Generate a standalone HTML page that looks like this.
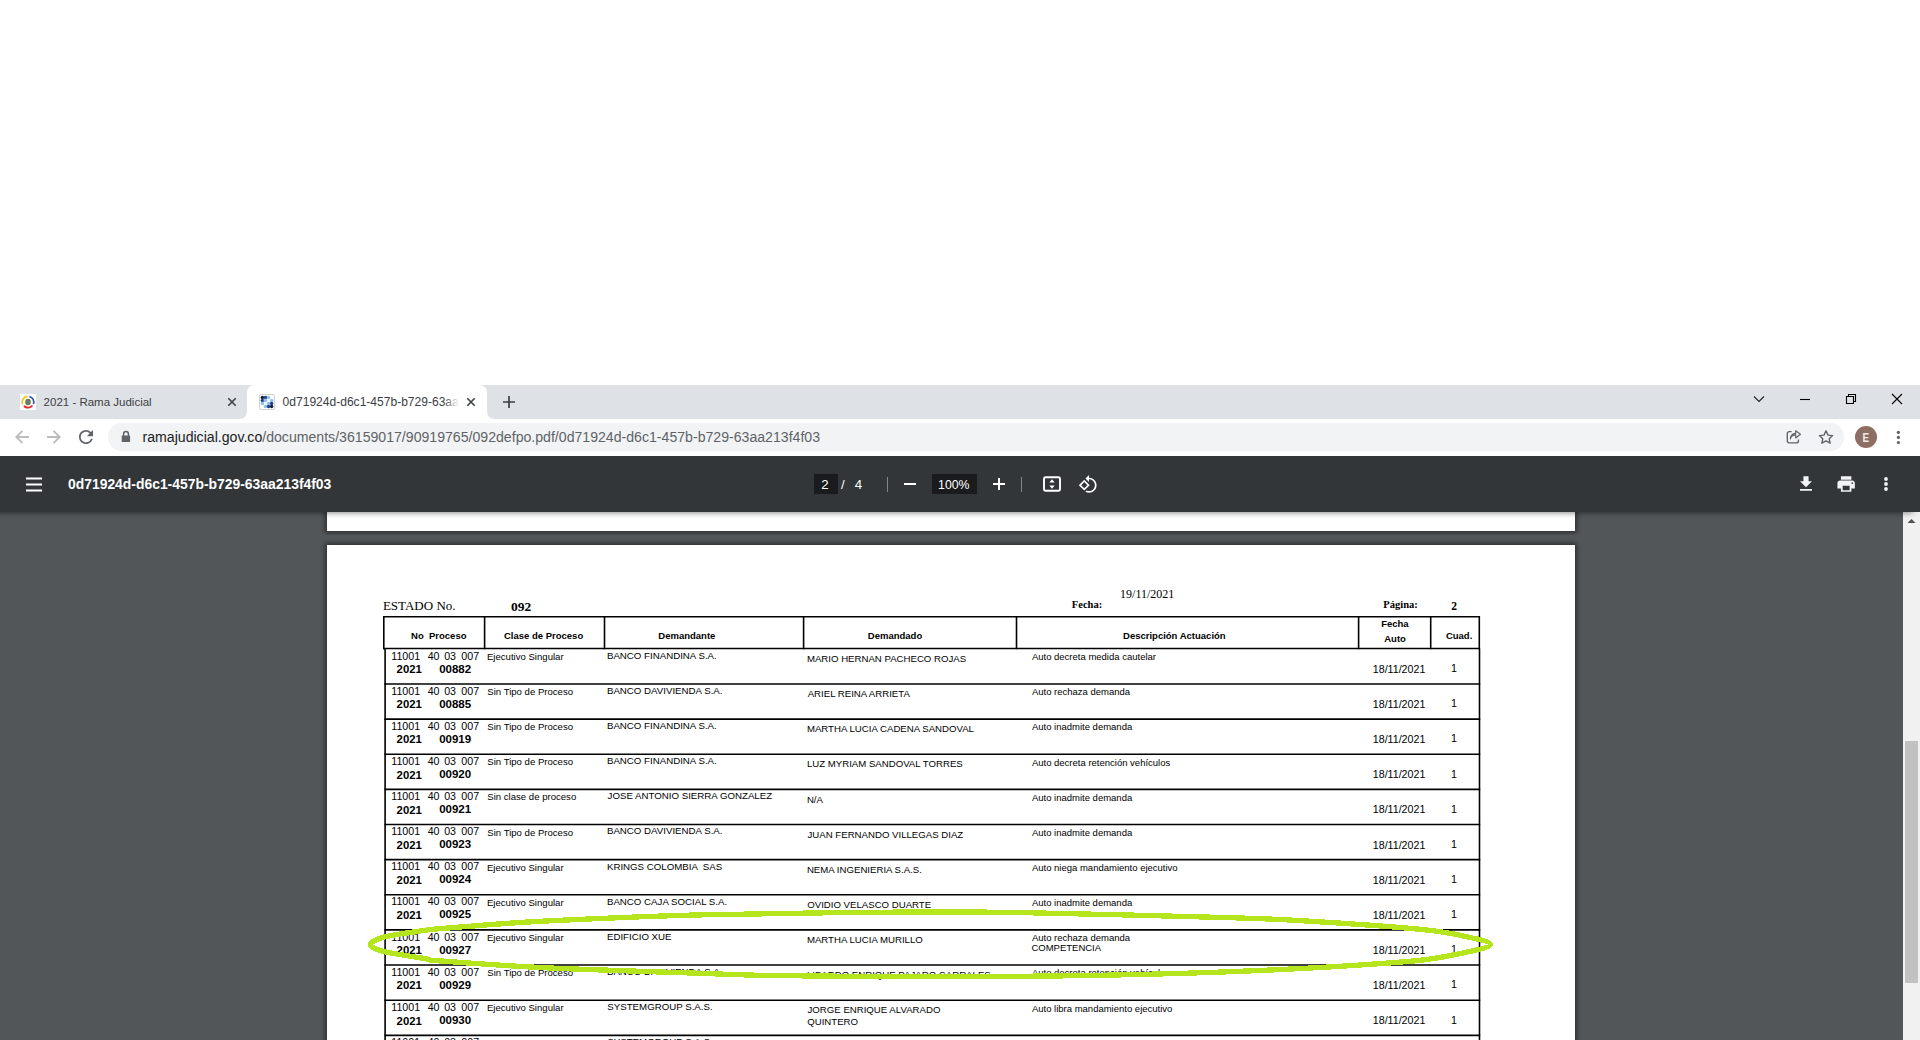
<!DOCTYPE html>
<html><head><meta charset="utf-8"><style>
html,body{margin:0;padding:0;background:#fff;overflow:hidden;}
svg{display:block;} text{white-space:pre;}
</style></head><body>
<svg width="1920" height="1040" viewBox="0 0 1920 1040">
<defs><linearGradient id="tabfade" x1="0" x2="1"><stop offset="0" stop-color="#fff" stop-opacity="0"/><stop offset="1" stop-color="#fff" stop-opacity="1"/></linearGradient></defs>
<rect x="0" y="512" width="1903" height="528" fill="#525659" />
<defs><filter id="sh" x="-5%" y="-5%" width="110%" height="110%"><feGaussianBlur stdDeviation="2.5"/></filter><filter id="tsh" x="-1%" y="-100%" width="102%" height="300%"><feGaussianBlur stdDeviation="3"/></filter><linearGradient id="fade" x1="0" x2="1"><stop offset="0" stop-color="#3c4043" stop-opacity="1"/><stop offset="1" stop-color="#3c4043" stop-opacity="0"/></linearGradient></defs>
<rect x="325" y="505" width="1252" height="28" fill="rgba(0,0,0,0.45)" filter="url(#sh)"/>
<rect x="325" y="543" width="1252" height="510" fill="rgba(0,0,0,0.45)" filter="url(#sh)"/>
<rect x="327" y="512" width="1248" height="19" fill="#fff" />
<rect x="327" y="545" width="1248" height="495" fill="#fff" />
<line x1="383.1" y1="616.8" x2="1479.9" y2="616.8" stroke="#000" stroke-width="1.6"/>
<line x1="383.1" y1="648.5" x2="1479.9" y2="648.5" stroke="#000" stroke-width="1.6"/>
<line x1="383.8" y1="616.0999999999999" x2="383.8" y2="649.2" stroke="#000" stroke-width="1.6"/>
<line x1="484.6" y1="616.0999999999999" x2="484.6" y2="649.2" stroke="#000" stroke-width="1.6"/>
<line x1="604.5" y1="616.0999999999999" x2="604.5" y2="649.2" stroke="#000" stroke-width="1.6"/>
<line x1="803.6" y1="616.0999999999999" x2="803.6" y2="649.2" stroke="#000" stroke-width="1.6"/>
<line x1="1016.5" y1="616.0999999999999" x2="1016.5" y2="649.2" stroke="#000" stroke-width="1.6"/>
<line x1="1358.6" y1="616.0999999999999" x2="1358.6" y2="649.2" stroke="#000" stroke-width="1.6"/>
<line x1="1430.7" y1="616.0999999999999" x2="1430.7" y2="649.2" stroke="#000" stroke-width="1.6"/>
<line x1="1479.3" y1="616.0999999999999" x2="1479.3" y2="649.2" stroke="#000" stroke-width="1.6"/>
<line x1="384.4" y1="683.9399999999999" x2="1480.2" y2="683.9399999999999" stroke="#000" stroke-width="1.6"/>
<line x1="384.4" y1="719.0799999999999" x2="1480.2" y2="719.0799999999999" stroke="#000" stroke-width="1.6"/>
<line x1="384.4" y1="754.2199999999999" x2="1480.2" y2="754.2199999999999" stroke="#000" stroke-width="1.6"/>
<line x1="384.4" y1="789.3599999999999" x2="1480.2" y2="789.3599999999999" stroke="#000" stroke-width="1.6"/>
<line x1="384.4" y1="824.4999999999999" x2="1480.2" y2="824.4999999999999" stroke="#000" stroke-width="1.6"/>
<line x1="384.4" y1="859.64" x2="1480.2" y2="859.64" stroke="#000" stroke-width="1.6"/>
<line x1="384.4" y1="894.78" x2="1480.2" y2="894.78" stroke="#000" stroke-width="1.6"/>
<line x1="384.4" y1="929.92" x2="1480.2" y2="929.92" stroke="#000" stroke-width="1.6"/>
<line x1="384.4" y1="965.06" x2="1480.2" y2="965.06" stroke="#000" stroke-width="1.6"/>
<line x1="384.4" y1="1000.1999999999999" x2="1480.2" y2="1000.1999999999999" stroke="#000" stroke-width="1.6"/>
<line x1="384.4" y1="1035.34" x2="1480.2" y2="1035.34" stroke="#000" stroke-width="1.6"/>
<line x1="385.1" y1="648.5" x2="385.1" y2="1040" stroke="#000" stroke-width="1.6"/>
<line x1="1479.5" y1="648.5" x2="1479.5" y2="1040" stroke="#000" stroke-width="1.6"/>
<text x="382.92" y="610.20" font-family="'Liberation Serif'" font-size="13.0" font-weight="400" fill="#000" >ESTADO No.</text>
<text x="510.89" y="610.50" font-family="'Liberation Serif'" font-size="13.5" font-weight="700" fill="#000" >092</text>
<text x="1071.87" y="607.90" font-family="'Liberation Serif'" font-size="10.5" font-weight="700" fill="#000" >Fecha:</text>
<text x="1120.08" y="597.90" font-family="'Liberation Serif'" font-size="12.0" font-weight="400" fill="#000" >19/11/2021</text>
<text x="1383.37" y="608.00" font-family="'Liberation Serif'" font-size="10.5" font-weight="700" fill="#000" >Página:</text>
<text x="1451.21" y="609.90" font-family="'Liberation Serif'" font-size="11.5" font-weight="700" fill="#000" >2</text>
<text x="411.06" y="639.20" font-family="'Liberation Sans'" font-size="9.5" font-weight="700" fill="#000" >No  Proceso</text>
<text x="504.01" y="639.20" font-family="'Liberation Sans'" font-size="9.5" font-weight="700" fill="#000" >Clase de Proceso</text>
<text x="658.36" y="639.00" font-family="'Liberation Sans'" font-size="9.5" font-weight="700" fill="#000" >Demandante</text>
<text x="867.86" y="639.20" font-family="'Liberation Sans'" font-size="9.5" font-weight="700" fill="#000" >Demandado</text>
<text x="1123.06" y="639.20" font-family="'Liberation Sans'" font-size="9.5" font-weight="700" fill="#000" >Descripción Actuación</text>
<text x="1381.16" y="626.70" font-family="'Liberation Sans'" font-size="9.5" font-weight="700" fill="#000" >Fecha</text>
<text x="1384.26" y="641.60" font-family="'Liberation Sans'" font-size="9.5" font-weight="700" fill="#000" >Auto</text>
<text x="1445.91" y="638.80" font-family="'Liberation Sans'" font-size="9.5" font-weight="700" fill="#000" >Cuad.</text>
<text x="391.29" y="659.50" font-family="'Liberation Sans'" font-size="10.67" font-weight="400" fill="#000" >11001</text>
<text x="427.64" y="659.50" font-family="'Liberation Sans'" font-size="10.67" font-weight="400" fill="#000" >40</text>
<text x="444.18" y="659.50" font-family="'Liberation Sans'" font-size="10.67" font-weight="400" fill="#000" >03</text>
<text x="461.33" y="659.50" font-family="'Liberation Sans'" font-size="10.67" font-weight="400" fill="#000" >007</text>
<text x="396.60" y="673.10" font-family="'Liberation Sans'" font-size="11.33" font-weight="700" fill="#000" >2021</text>
<text x="439.14" y="672.50" font-family="'Liberation Sans'" font-size="11.5" font-weight="700" fill="#000" >00882</text>
<text x="606.95" y="658.70" font-family="'Liberation Sans'" font-size="9.7" font-weight="400" fill="#000" >BANCO FINANDINA S.A.</text>
<text x="486.96" y="659.90" font-family="'Liberation Sans'" font-size="9.58" font-weight="400" fill="#000" >Ejecutivo Singular</text>
<text x="806.91" y="662.00" font-family="'Liberation Sans'" font-size="9.63" font-weight="400" fill="#000" >MARIO HERNAN PACHECO ROJAS</text>
<text x="1031.88" y="660.20" font-family="'Liberation Sans'" font-size="9.5" font-weight="400" fill="#000" >Auto decreta medida cautelar</text>
<text x="1372.79" y="672.80" font-family="'Liberation Sans'" font-size="10.67" font-weight="400" fill="#000" >18/11/2021</text>
<text x="1450.99" y="672.20" font-family="'Liberation Sans'" font-size="10.67" font-weight="400" fill="#000" >1</text>
<text x="391.29" y="694.64" font-family="'Liberation Sans'" font-size="10.67" font-weight="400" fill="#000" >11001</text>
<text x="427.64" y="694.64" font-family="'Liberation Sans'" font-size="10.67" font-weight="400" fill="#000" >40</text>
<text x="444.18" y="694.64" font-family="'Liberation Sans'" font-size="10.67" font-weight="400" fill="#000" >03</text>
<text x="461.33" y="694.64" font-family="'Liberation Sans'" font-size="10.67" font-weight="400" fill="#000" >007</text>
<text x="396.60" y="708.24" font-family="'Liberation Sans'" font-size="11.33" font-weight="700" fill="#000" >2021</text>
<text x="439.14" y="707.64" font-family="'Liberation Sans'" font-size="11.5" font-weight="700" fill="#000" >00885</text>
<text x="606.95" y="693.84" font-family="'Liberation Sans'" font-size="9.7" font-weight="400" fill="#000" >BANCO DAVIVIENDA S.A.</text>
<text x="487.32" y="695.04" font-family="'Liberation Sans'" font-size="9.58" font-weight="400" fill="#000" >Sin Tipo de Proceso</text>
<text x="807.68" y="697.14" font-family="'Liberation Sans'" font-size="9.63" font-weight="400" fill="#000" >ARIEL REINA ARRIETA</text>
<text x="1031.88" y="695.34" font-family="'Liberation Sans'" font-size="9.5" font-weight="400" fill="#000" >Auto rechaza demanda</text>
<text x="1372.79" y="707.94" font-family="'Liberation Sans'" font-size="10.67" font-weight="400" fill="#000" >18/11/2021</text>
<text x="1450.99" y="707.34" font-family="'Liberation Sans'" font-size="10.67" font-weight="400" fill="#000" >1</text>
<text x="391.29" y="729.78" font-family="'Liberation Sans'" font-size="10.67" font-weight="400" fill="#000" >11001</text>
<text x="427.64" y="729.78" font-family="'Liberation Sans'" font-size="10.67" font-weight="400" fill="#000" >40</text>
<text x="444.18" y="729.78" font-family="'Liberation Sans'" font-size="10.67" font-weight="400" fill="#000" >03</text>
<text x="461.33" y="729.78" font-family="'Liberation Sans'" font-size="10.67" font-weight="400" fill="#000" >007</text>
<text x="396.60" y="743.38" font-family="'Liberation Sans'" font-size="11.33" font-weight="700" fill="#000" >2021</text>
<text x="439.14" y="742.78" font-family="'Liberation Sans'" font-size="11.5" font-weight="700" fill="#000" >00919</text>
<text x="606.95" y="728.98" font-family="'Liberation Sans'" font-size="9.7" font-weight="400" fill="#000" >BANCO FINANDINA S.A.</text>
<text x="487.32" y="730.18" font-family="'Liberation Sans'" font-size="9.58" font-weight="400" fill="#000" >Sin Tipo de Proceso</text>
<text x="806.91" y="732.28" font-family="'Liberation Sans'" font-size="9.63" font-weight="400" fill="#000" >MARTHA LUCIA CADENA SANDOVAL</text>
<text x="1031.88" y="730.48" font-family="'Liberation Sans'" font-size="9.5" font-weight="400" fill="#000" >Auto inadmite demanda</text>
<text x="1372.79" y="743.08" font-family="'Liberation Sans'" font-size="10.67" font-weight="400" fill="#000" >18/11/2021</text>
<text x="1450.99" y="742.48" font-family="'Liberation Sans'" font-size="10.67" font-weight="400" fill="#000" >1</text>
<text x="391.29" y="764.92" font-family="'Liberation Sans'" font-size="10.67" font-weight="400" fill="#000" >11001</text>
<text x="427.64" y="764.92" font-family="'Liberation Sans'" font-size="10.67" font-weight="400" fill="#000" >40</text>
<text x="444.18" y="764.92" font-family="'Liberation Sans'" font-size="10.67" font-weight="400" fill="#000" >03</text>
<text x="461.33" y="764.92" font-family="'Liberation Sans'" font-size="10.67" font-weight="400" fill="#000" >007</text>
<text x="396.60" y="778.52" font-family="'Liberation Sans'" font-size="11.33" font-weight="700" fill="#000" >2021</text>
<text x="439.14" y="777.92" font-family="'Liberation Sans'" font-size="11.5" font-weight="700" fill="#000" >00920</text>
<text x="606.95" y="764.12" font-family="'Liberation Sans'" font-size="9.7" font-weight="400" fill="#000" >BANCO FINANDINA S.A.</text>
<text x="487.32" y="765.32" font-family="'Liberation Sans'" font-size="9.58" font-weight="400" fill="#000" >Sin Tipo de Proceso</text>
<text x="806.91" y="767.42" font-family="'Liberation Sans'" font-size="9.63" font-weight="400" fill="#000" >LUZ MYRIAM SANDOVAL TORRES</text>
<text x="1031.88" y="765.62" font-family="'Liberation Sans'" font-size="9.5" font-weight="400" fill="#000" >Auto decreta retención vehículos</text>
<text x="1372.79" y="778.22" font-family="'Liberation Sans'" font-size="10.67" font-weight="400" fill="#000" >18/11/2021</text>
<text x="1450.99" y="777.62" font-family="'Liberation Sans'" font-size="10.67" font-weight="400" fill="#000" >1</text>
<text x="391.29" y="800.06" font-family="'Liberation Sans'" font-size="10.67" font-weight="400" fill="#000" >11001</text>
<text x="427.64" y="800.06" font-family="'Liberation Sans'" font-size="10.67" font-weight="400" fill="#000" >40</text>
<text x="444.18" y="800.06" font-family="'Liberation Sans'" font-size="10.67" font-weight="400" fill="#000" >03</text>
<text x="461.33" y="800.06" font-family="'Liberation Sans'" font-size="10.67" font-weight="400" fill="#000" >007</text>
<text x="396.60" y="813.66" font-family="'Liberation Sans'" font-size="11.33" font-weight="700" fill="#000" >2021</text>
<text x="439.14" y="813.06" font-family="'Liberation Sans'" font-size="11.5" font-weight="700" fill="#000" >00921</text>
<text x="607.59" y="799.26" font-family="'Liberation Sans'" font-size="9.7" font-weight="400" fill="#000" >JOSE ANTONIO SIERRA GONZALEZ</text>
<text x="487.32" y="800.46" font-family="'Liberation Sans'" font-size="9.58" font-weight="400" fill="#000" >Sin clase de proceso</text>
<text x="806.91" y="802.56" font-family="'Liberation Sans'" font-size="9.63" font-weight="400" fill="#000" >N/A</text>
<text x="1031.88" y="800.76" font-family="'Liberation Sans'" font-size="9.5" font-weight="400" fill="#000" >Auto inadmite demanda</text>
<text x="1372.79" y="813.36" font-family="'Liberation Sans'" font-size="10.67" font-weight="400" fill="#000" >18/11/2021</text>
<text x="1450.99" y="812.76" font-family="'Liberation Sans'" font-size="10.67" font-weight="400" fill="#000" >1</text>
<text x="391.29" y="835.20" font-family="'Liberation Sans'" font-size="10.67" font-weight="400" fill="#000" >11001</text>
<text x="427.64" y="835.20" font-family="'Liberation Sans'" font-size="10.67" font-weight="400" fill="#000" >40</text>
<text x="444.18" y="835.20" font-family="'Liberation Sans'" font-size="10.67" font-weight="400" fill="#000" >03</text>
<text x="461.33" y="835.20" font-family="'Liberation Sans'" font-size="10.67" font-weight="400" fill="#000" >007</text>
<text x="396.60" y="848.80" font-family="'Liberation Sans'" font-size="11.33" font-weight="700" fill="#000" >2021</text>
<text x="439.14" y="848.20" font-family="'Liberation Sans'" font-size="11.5" font-weight="700" fill="#000" >00923</text>
<text x="606.95" y="834.40" font-family="'Liberation Sans'" font-size="9.7" font-weight="400" fill="#000" >BANCO DAVIVIENDA S.A.</text>
<text x="487.32" y="835.60" font-family="'Liberation Sans'" font-size="9.58" font-weight="400" fill="#000" >Sin Tipo de Proceso</text>
<text x="807.55" y="837.70" font-family="'Liberation Sans'" font-size="9.63" font-weight="400" fill="#000" >JUAN FERNANDO VILLEGAS DIAZ</text>
<text x="1031.88" y="835.90" font-family="'Liberation Sans'" font-size="9.5" font-weight="400" fill="#000" >Auto inadmite demanda</text>
<text x="1372.79" y="848.50" font-family="'Liberation Sans'" font-size="10.67" font-weight="400" fill="#000" >18/11/2021</text>
<text x="1450.99" y="847.90" font-family="'Liberation Sans'" font-size="10.67" font-weight="400" fill="#000" >1</text>
<text x="391.29" y="870.34" font-family="'Liberation Sans'" font-size="10.67" font-weight="400" fill="#000" >11001</text>
<text x="427.64" y="870.34" font-family="'Liberation Sans'" font-size="10.67" font-weight="400" fill="#000" >40</text>
<text x="444.18" y="870.34" font-family="'Liberation Sans'" font-size="10.67" font-weight="400" fill="#000" >03</text>
<text x="461.33" y="870.34" font-family="'Liberation Sans'" font-size="10.67" font-weight="400" fill="#000" >007</text>
<text x="396.60" y="883.94" font-family="'Liberation Sans'" font-size="11.33" font-weight="700" fill="#000" >2021</text>
<text x="439.14" y="883.34" font-family="'Liberation Sans'" font-size="11.5" font-weight="700" fill="#000" >00924</text>
<text x="606.95" y="869.54" font-family="'Liberation Sans'" font-size="9.7" font-weight="400" fill="#000" >KRINGS COLOMBIA  SAS</text>
<text x="486.96" y="870.74" font-family="'Liberation Sans'" font-size="9.58" font-weight="400" fill="#000" >Ejecutivo Singular</text>
<text x="806.91" y="872.84" font-family="'Liberation Sans'" font-size="9.63" font-weight="400" fill="#000" >NEMA INGENIERIA S.A.S.</text>
<text x="1031.88" y="871.04" font-family="'Liberation Sans'" font-size="9.5" font-weight="400" fill="#000" >Auto niega mandamiento ejecutivo</text>
<text x="1372.79" y="883.64" font-family="'Liberation Sans'" font-size="10.67" font-weight="400" fill="#000" >18/11/2021</text>
<text x="1450.99" y="883.04" font-family="'Liberation Sans'" font-size="10.67" font-weight="400" fill="#000" >1</text>
<text x="391.29" y="905.48" font-family="'Liberation Sans'" font-size="10.67" font-weight="400" fill="#000" >11001</text>
<text x="427.64" y="905.48" font-family="'Liberation Sans'" font-size="10.67" font-weight="400" fill="#000" >40</text>
<text x="444.18" y="905.48" font-family="'Liberation Sans'" font-size="10.67" font-weight="400" fill="#000" >03</text>
<text x="461.33" y="905.48" font-family="'Liberation Sans'" font-size="10.67" font-weight="400" fill="#000" >007</text>
<text x="396.60" y="919.08" font-family="'Liberation Sans'" font-size="11.33" font-weight="700" fill="#000" >2021</text>
<text x="439.14" y="918.48" font-family="'Liberation Sans'" font-size="11.5" font-weight="700" fill="#000" >00925</text>
<text x="606.95" y="904.68" font-family="'Liberation Sans'" font-size="9.7" font-weight="400" fill="#000" >BANCO CAJA SOCIAL S.A.</text>
<text x="486.96" y="905.88" font-family="'Liberation Sans'" font-size="9.58" font-weight="400" fill="#000" >Ejecutivo Singular</text>
<text x="807.25" y="907.98" font-family="'Liberation Sans'" font-size="9.63" font-weight="400" fill="#000" >OVIDIO VELASCO DUARTE</text>
<text x="1031.88" y="906.18" font-family="'Liberation Sans'" font-size="9.5" font-weight="400" fill="#000" >Auto inadmite demanda</text>
<text x="1372.79" y="918.78" font-family="'Liberation Sans'" font-size="10.67" font-weight="400" fill="#000" >18/11/2021</text>
<text x="1450.99" y="918.18" font-family="'Liberation Sans'" font-size="10.67" font-weight="400" fill="#000" >1</text>
<text x="391.29" y="940.62" font-family="'Liberation Sans'" font-size="10.67" font-weight="400" fill="#000" >11001</text>
<text x="427.64" y="940.62" font-family="'Liberation Sans'" font-size="10.67" font-weight="400" fill="#000" >40</text>
<text x="444.18" y="940.62" font-family="'Liberation Sans'" font-size="10.67" font-weight="400" fill="#000" >03</text>
<text x="461.33" y="940.62" font-family="'Liberation Sans'" font-size="10.67" font-weight="400" fill="#000" >007</text>
<text x="396.60" y="954.22" font-family="'Liberation Sans'" font-size="11.33" font-weight="700" fill="#000" >2021</text>
<text x="439.14" y="953.62" font-family="'Liberation Sans'" font-size="11.5" font-weight="700" fill="#000" >00927</text>
<text x="606.95" y="939.82" font-family="'Liberation Sans'" font-size="9.7" font-weight="400" fill="#000" >EDIFICIO XUE</text>
<text x="486.96" y="941.02" font-family="'Liberation Sans'" font-size="9.58" font-weight="400" fill="#000" >Ejecutivo Singular</text>
<text x="806.91" y="943.12" font-family="'Liberation Sans'" font-size="9.63" font-weight="400" fill="#000" >MARTHA LUCIA MURILLO</text>
<text x="1031.88" y="941.32" font-family="'Liberation Sans'" font-size="9.5" font-weight="400" fill="#000" >Auto rechaza demanda</text>
<text x="1031.42" y="951.12" font-family="'Liberation Sans'" font-size="9.5" font-weight="400" fill="#000" >COMPETENCIA</text>
<text x="1372.79" y="953.92" font-family="'Liberation Sans'" font-size="10.67" font-weight="400" fill="#000" >18/11/2021</text>
<text x="1450.99" y="953.32" font-family="'Liberation Sans'" font-size="10.67" font-weight="400" fill="#000" >1</text>
<text x="391.29" y="975.76" font-family="'Liberation Sans'" font-size="10.67" font-weight="400" fill="#000" >11001</text>
<text x="427.64" y="975.76" font-family="'Liberation Sans'" font-size="10.67" font-weight="400" fill="#000" >40</text>
<text x="444.18" y="975.76" font-family="'Liberation Sans'" font-size="10.67" font-weight="400" fill="#000" >03</text>
<text x="461.33" y="975.76" font-family="'Liberation Sans'" font-size="10.67" font-weight="400" fill="#000" >007</text>
<text x="396.60" y="989.36" font-family="'Liberation Sans'" font-size="11.33" font-weight="700" fill="#000" >2021</text>
<text x="439.14" y="988.76" font-family="'Liberation Sans'" font-size="11.5" font-weight="700" fill="#000" >00929</text>
<text x="606.95" y="974.96" font-family="'Liberation Sans'" font-size="9.7" font-weight="400" fill="#000" >BANCO DAVIVIENDA S.A.</text>
<text x="487.32" y="976.16" font-family="'Liberation Sans'" font-size="9.58" font-weight="400" fill="#000" >Sin Tipo de Proceso</text>
<text x="806.91" y="978.26" font-family="'Liberation Sans'" font-size="9.63" font-weight="400" fill="#000" >LIBARDO ENRIQUE PAJARO CARRALES</text>
<text x="1031.88" y="976.46" font-family="'Liberation Sans'" font-size="9.5" font-weight="400" fill="#000" >Auto decreta retención vehículos</text>
<text x="1372.79" y="989.06" font-family="'Liberation Sans'" font-size="10.67" font-weight="400" fill="#000" >18/11/2021</text>
<text x="1450.99" y="988.46" font-family="'Liberation Sans'" font-size="10.67" font-weight="400" fill="#000" >1</text>
<text x="391.29" y="1010.90" font-family="'Liberation Sans'" font-size="10.67" font-weight="400" fill="#000" >11001</text>
<text x="427.64" y="1010.90" font-family="'Liberation Sans'" font-size="10.67" font-weight="400" fill="#000" >40</text>
<text x="444.18" y="1010.90" font-family="'Liberation Sans'" font-size="10.67" font-weight="400" fill="#000" >03</text>
<text x="461.33" y="1010.90" font-family="'Liberation Sans'" font-size="10.67" font-weight="400" fill="#000" >007</text>
<text x="396.60" y="1024.50" font-family="'Liberation Sans'" font-size="11.33" font-weight="700" fill="#000" >2021</text>
<text x="439.14" y="1023.90" font-family="'Liberation Sans'" font-size="11.5" font-weight="700" fill="#000" >00930</text>
<text x="607.31" y="1010.10" font-family="'Liberation Sans'" font-size="9.7" font-weight="400" fill="#000" >SYSTEMGROUP S.A.S.</text>
<text x="486.96" y="1011.30" font-family="'Liberation Sans'" font-size="9.58" font-weight="400" fill="#000" >Ejecutivo Singular</text>
<text x="807.55" y="1013.40" font-family="'Liberation Sans'" font-size="9.63" font-weight="400" fill="#000" >JORGE ENRIQUE ALVARADO</text>
<text x="807.25" y="1024.70" font-family="'Liberation Sans'" font-size="9.63" font-weight="400" fill="#000" >QUINTERO</text>
<text x="1031.88" y="1011.60" font-family="'Liberation Sans'" font-size="9.5" font-weight="400" fill="#000" >Auto libra mandamiento ejecutivo</text>
<text x="1372.79" y="1024.20" font-family="'Liberation Sans'" font-size="10.67" font-weight="400" fill="#000" >18/11/2021</text>
<text x="1450.99" y="1023.60" font-family="'Liberation Sans'" font-size="10.67" font-weight="400" fill="#000" >1</text>
<text x="391.29" y="1046.04" font-family="'Liberation Sans'" font-size="10.67" font-weight="400" fill="#000" >11001</text>
<text x="427.64" y="1046.04" font-family="'Liberation Sans'" font-size="10.67" font-weight="400" fill="#000" >40</text>
<text x="444.18" y="1046.04" font-family="'Liberation Sans'" font-size="10.67" font-weight="400" fill="#000" >03</text>
<text x="461.33" y="1046.04" font-family="'Liberation Sans'" font-size="10.67" font-weight="400" fill="#000" >007</text>
<text x="396.60" y="1059.64" font-family="'Liberation Sans'" font-size="11.33" font-weight="700" fill="#000" >2021</text>
<text x="439.14" y="1059.04" font-family="'Liberation Sans'" font-size="11.5" font-weight="700" fill="#000" >00931</text>
<text x="607.31" y="1045.24" font-family="'Liberation Sans'" font-size="9.7" font-weight="400" fill="#000" >SYSTEMGROUP S.A.S.</text>
<path d="M370.4,944.6 C370.4,942.2 374.9,939.5 384,937.1 C393.1,934.7 415.7,931.7 425,930.3 C434.3,928.9 424.2,930.0 440,928.7 C455.8,927.4 493.3,924.2 520,922.5 C546.7,920.8 573.3,919.7 600,918.5 C626.7,917.3 653.3,916.2 680,915.4 C706.7,914.6 733.3,914.4 760,913.9 C786.7,913.4 811.0,912.9 840,912.6 C869.0,912.3 903.0,912.0 934,912 C965.0,912.0 978.3,911.8 1026,912.7 C1073.7,913.6 1174.3,916.1 1220,917.4 C1265.7,918.7 1266.7,918.6 1300,920.6 C1333.3,922.6 1392.5,926.7 1420,929.3 C1447.5,931.9 1453.2,933.9 1465,936.4 C1476.8,938.9 1490.5,941.7 1490.5,944.4 C1490.5,947.1 1476.8,949.9 1465,952.5 C1453.2,955.1 1440.8,958.0 1420,960.3 C1399.2,962.6 1366.7,964.6 1340,966.3 C1313.3,968.0 1286.7,969.3 1260,970.5 C1233.3,971.7 1206.7,972.6 1180,973.4 C1153.3,974.2 1126.7,974.8 1100,975.3 C1073.3,975.8 1050.0,976.1 1020,976.3 C990.0,976.5 950.0,976.6 920,976.6 C890.0,976.6 866.7,976.4 840,976.2 C813.3,976.0 783.3,975.8 760,975.3 C736.7,974.8 723.3,974.1 700,973.3 C676.7,972.5 646.7,971.6 620,970.6 C593.3,969.6 570.0,969.1 540,967.5 C510.0,965.9 459.2,962.4 440,960.9 C420.8,959.4 434.3,960.2 425,958.6 C415.7,957.0 393.1,953.8 384,951.5 C374.9,949.2 370.4,947.0 370.4,944.6Z" fill="none" stroke="#b5e61d" stroke-width="5.3" stroke-linejoin="round" shape-rendering="crispEdges"/>
<rect x="1903" y="512" width="17" height="528" fill="#f1f1f1" />
<path d="M1907.5,523 L1911.5,519 L1915.5,523 Z" fill="#505050"/>
<rect x="1905" y="741" width="13" height="242" fill="#c1c1c1" />
<rect x="-10" y="490" width="1923" height="22" fill="rgba(0,0,0,0.6)" filter="url(#tsh)"/>
<rect x="0" y="456" width="1920" height="56" fill="#323639" />
<rect x="26" y="477.5" width="16" height="2" fill="#fff" />
<rect x="26" y="483.5" width="16" height="2" fill="#fff" />
<rect x="26" y="489.5" width="16" height="2" fill="#fff" />
<rect x="814" y="474" width="24" height="20" fill="#191b1c" />
<rect x="887" y="477" width="1" height="15" fill="#80868b" />
<rect x="904" y="483" width="12" height="2" fill="#fff" />
<rect x="932" y="474" width="45" height="20" fill="#191b1c" />
<rect x="993" y="483" width="12" height="2" fill="#fff" />
<rect x="998" y="478" width="2" height="12" fill="#fff" />
<rect x="1021" y="477" width="1" height="15" fill="#80868b" />
<rect x="1044" y="477.2" width="16" height="13.6" rx="1.8" fill="none" stroke="#fff" stroke-width="1.9"/>
<path d="M1049.3,482.6 L1052,479.3 L1054.7,482.6 Z M1049.3,485.4 L1052,488.7 L1054.7,485.4 Z" fill="#fff"/>
<g transform="translate(1078.1,474.3) scale(0.84)"><path fill="#fff" d="M7.34 6.41L.86 12.9l6.49 6.48 6.49-6.48-6.5-6.49zM3.69 12.9l3.66-3.66L11 12.9l-3.66 3.66-3.65-3.66zm15.67-6.26C17.61 4.88 15.3 4 13 4V.76L8.76 5 13 9.24V6c1.79 0 3.58.68 4.95 2.05 2.73 2.73 2.73 7.17 0 9.9C16.58 19.32 14.79 20 13 20c-.97 0-1.94-.21-2.84-.61l-1.49 1.49C10.02 21.62 11.51 22 13 22c2.3 0 4.61-.88 6.36-2.64 3.52-3.51 3.52-9.21 0-12.72z"/></g>
<g transform="translate(1795.7,473.6) scale(0.857)"><path fill="#f1f3f4" d="M19 9h-4V3H9v6H5l7 7 7-7zM5 18v2h14v-2H5z"/></g>
<g transform="translate(1835.7,473.6) scale(0.87)"><path fill="#f1f3f4" d="M19 8H5c-1.66 0-3 1.34-3 3v6h4v4h12v-4h4v-6c0-1.66-1.34-3-3-3zm-3 11H8v-5h8v5zm3-7c-.55 0-1-.45-1-1s.45-1 1-1 1 .45 1 1-.45 1-1 1zm-1-9H6v4h12V3z"/></g>
<circle cx="1886" cy="479" r="1.9" fill="#f1f3f4"/>
<circle cx="1886" cy="484" r="1.9" fill="#f1f3f4"/>
<circle cx="1886" cy="489" r="1.9" fill="#f1f3f4"/>
<rect x="0" y="419" width="1920" height="37" fill="#fff" />
<rect x="108" y="423" width="1736" height="28" rx="14" fill="#f1f3f4"/>
<path d="M29,437 H16.5 M22.5,430.8 L16.3,437 L22.5,443.2" fill="none" stroke="#bcbcbc" stroke-width="1.9"/>
<path d="M47,437 H59.5 M53.5,430.8 L59.7,437 L53.5,443.2" fill="none" stroke="#bcbcbc" stroke-width="1.9"/>
<g transform="translate(75.5,426.5) scale(0.875)"><path fill="#5f6368" d="M17.65 6.35A7.958 7.958 0 0 0 12 4c-4.42 0-7.99 3.58-7.99 8s3.57 8 7.99 8c3.73 0 6.84-2.55 7.73-6h-2.08A5.99 5.99 0 0 1 12 18c-3.31 0-6-2.69-6-6s2.69-6 6-6c1.66 0 3.14.69 4.22 1.78L13 11h7V4l-2.35 2.35z"/></g>
<path d="M123.6,436 v-2.1 a2.3,2.3 0 0 1 4.8,0 v2.1" fill="none" stroke="#5f6368" stroke-width="1.5"/>
<rect x="121.7" y="435.5" width="8.4" height="6.6" fill="#5f6368" rx="0.6"/>
<path d="M1791.6,431.6 H1789.2 a1.9,1.9 0 0 0 -1.9,1.9 V440.9 a1.9,1.9 0 0 0 1.9,1.9 h7.3 a1.9,1.9 0 0 0 1.9,-1.9 V439.4" fill="none" stroke="#5f6368" stroke-width="1.35"/>
<path d="M1790.4,438.8 C1790.9,435.9 1792.9,434.8 1795.7,434.8 V437.9 L1800.4,434.3 L1795.7,430.8 V433.4 C1792.6,433.6 1790.6,435.6 1790.4,438.8 Z" fill="none" stroke="#5f6368" stroke-width="1.2" stroke-linejoin="round"/>
<path d="M1826,430.8 L1828,435.1 L1832.6,435.6 L1829.2,438.7 L1830.1,443.2 L1826,440.9 L1821.9,443.2 L1822.8,438.7 L1819.4,435.6 L1824,435.1 Z" fill="none" stroke="#5f6368" stroke-width="1.4" stroke-linejoin="round"/>
<circle cx="1866" cy="437" r="11" fill="#8d6e63"/>
<circle cx="1898.4" cy="432.3" r="1.6" fill="#5f6368"/>
<circle cx="1898.4" cy="437.4" r="1.6" fill="#5f6368"/>
<circle cx="1898.4" cy="442.5" r="1.6" fill="#5f6368"/>
<rect x="0" y="385" width="1920" height="34" fill="#dee1e6" />
<path d="M239,419 Q247,419 247,411 L247,393 Q247,385 255,385 L479,385 Q487,385 487,393 L487,411 Q487,419 495,419 Z" fill="#fff"/>
<rect x="20" y="394" width="16" height="16" fill="#fff" />
<circle cx="28" cy="402" r="6.2" fill="none" stroke="#c9d8f0" stroke-width="0.8"/>
<path d="M22.6,404 A5.6,5.6 0 0 1 27.5,396.4" fill="none" stroke="#f4c800" stroke-width="1.6"/>
<path d="M29.5,396.6 A5.6,5.6 0 0 1 33.4,404" fill="none" stroke="#2f55a8" stroke-width="1.6"/>
<path d="M24,406 A5.6,5.6 0 0 0 32.4,405.5" fill="none" stroke="#e8262b" stroke-width="1.8"/>
<ellipse cx="28" cy="402" rx="2.8" ry="3.2" fill="#7a7a40"/>
<rect x="26.6" y="400.5" width="2.8" height="3" fill="#4f7f8a"/>
<path d="M228.3,398.3 L235.7,405.7 M235.7,398.3 L228.3,405.7" stroke="#3c4043" stroke-width="1.6"/>
<rect x="259.5" y="394.5" width="15" height="15" rx="1.5" fill="#fff" stroke="#d0d0d0" stroke-width="1"/>
<circle cx="262.40" cy="397.40" r="1.75" fill="#0c1f45"/>
<circle cx="265.47" cy="397.40" r="1.75" fill="#22428a"/>
<circle cx="268.54" cy="397.40" r="1.75" fill="#8ec0ec"/>
<circle cx="262.40" cy="400.40" r="1.75" fill="#22428a"/>
<circle cx="265.47" cy="400.40" r="1.75" fill="#8ec0ec"/>
<circle cx="271.61" cy="400.40" r="1.75" fill="#8ec0ec"/>
<circle cx="262.40" cy="403.40" r="1.75" fill="#8ec0ec"/>
<circle cx="268.54" cy="403.40" r="1.75" fill="#8ec0ec"/>
<circle cx="271.61" cy="403.40" r="1.75" fill="#22428a"/>
<circle cx="265.47" cy="406.40" r="1.75" fill="#8ec0ec"/>
<circle cx="268.54" cy="406.40" r="1.75" fill="#22428a"/>
<circle cx="271.61" cy="406.40" r="1.75" fill="#0c1f45"/>
<text x="68.00" y="489.10" font-family="'Liberation Sans'" font-size="13.9" font-weight="700" fill="#fff" >0d71924d-d6c1-457b-b729-63aa213f4f03</text>
<text x="821.24" y="489.30" font-family="'Liberation Sans'" font-size="13.3" font-weight="400" fill="#fff" >2</text>
<text x="841.00" y="489.30" font-family="'Liberation Sans'" font-size="13.3" font-weight="400" fill="#fff" >/</text>
<text x="854.87" y="489.30" font-family="'Liberation Sans'" font-size="13.3" font-weight="400" fill="#fff" >4</text>
<text x="938.07" y="489.30" font-family="'Liberation Sans'" font-size="12.3" font-weight="400" fill="#fff" >100%</text>
<text x="142.5" y="441.5" font-family="'Liberation Sans'" font-size="14.12" fill="#202124">ramajudicial.gov.co<tspan fill="#5f6368">/documents/36159017/90919765/092defpo.pdf/0d71924d-d6c1-457b-b729-63aa213f4f03</tspan></text>
<text transform="translate(1865.8,442) scale(0.78,1)" text-anchor="middle" font-family="'Liberation Sans'" font-size="12.6" font-weight="700" fill="#f3ebe8">E</text>
<text x="43.62" y="405.80" font-family="'Liberation Sans'" font-size="11.5" font-weight="400" fill="#3c4043" >2021 - Rama Judicial</text>
<clipPath id="tabclip"><rect x="280" y="388" width="180" height="30"/></clipPath><text clip-path="url(#tabclip)" x="282.6" y="405.8" font-family="'Liberation Sans'" font-size="12.05" fill="#3c4043">0d71924d-d6c1-457b-b729-63aa213f4f03</text>
<rect x="444" y="390" width="15" height="22" fill="url(#tabfade)"/><rect x="459" y="390" width="26" height="22" fill="#fff"/>
<path d="M467.3,398.3 L474.7,405.7 M474.7,398.3 L467.3,405.7" stroke="#3c4043" stroke-width="1.6"/>
<path d="M509,396 V408 M503,402 H515" stroke="#3c4043" stroke-width="1.7"/>
<path d="M1754,396.5 L1759,401.5 L1764,396.5" fill="none" stroke="#202124" stroke-width="1.1"/>
<path d="M1800,399.5 H1810" stroke="#000" stroke-width="1.1"/>
<path d="M1846.5,396.5 h7 v7 h-7 z M1848.5,396.5 v-2 h7 v7 h-2" fill="none" stroke="#000" stroke-width="1.1"/>
<path d="M1892,394 L1902,404 M1902,394 L1892,404" stroke="#000" stroke-width="1.1"/>
</svg>
</body></html>
